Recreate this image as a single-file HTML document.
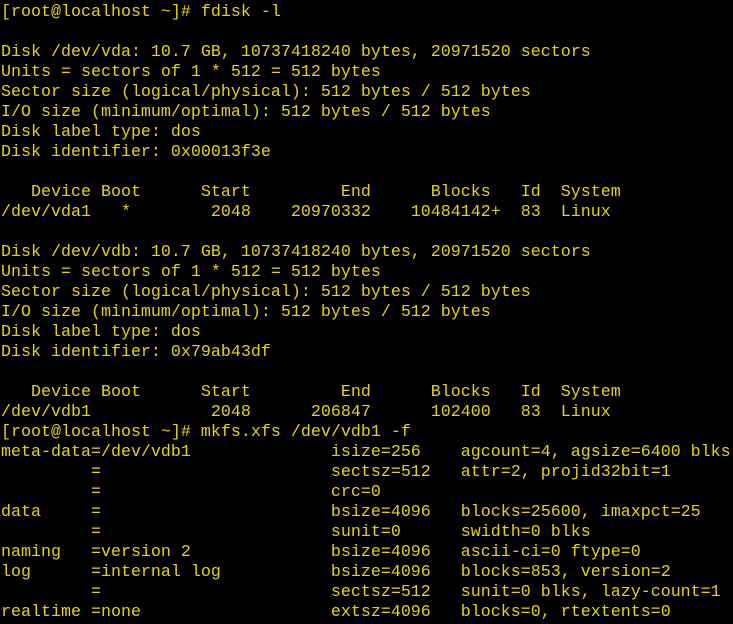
<!DOCTYPE html>
<html><head><meta charset="utf-8"><style>
html,body{margin:0;padding:0;background:#000;width:733px;height:624px;overflow:hidden}
pre{margin:0;padding:3px 0 0 1px;font-family:"Liberation Mono",monospace;font-size:16.667px;line-height:20px;color:#e3d21c;white-space:pre}
</style></head><body><pre>[root@localhost ~]# fdisk -l

Disk /dev/vda: 10.7 GB, 10737418240 bytes, 20971520 sectors
Units = sectors of 1 * 512 = 512 bytes
Sector size (logical/physical): 512 bytes / 512 bytes
I/O size (minimum/optimal): 512 bytes / 512 bytes
Disk label type: dos
Disk identifier: 0x00013f3e

   Device Boot      Start         End      Blocks   Id  System
/dev/vda1   *        2048    20970332    10484142+  83  Linux

Disk /dev/vdb: 10.7 GB, 10737418240 bytes, 20971520 sectors
Units = sectors of 1 * 512 = 512 bytes
Sector size (logical/physical): 512 bytes / 512 bytes
I/O size (minimum/optimal): 512 bytes / 512 bytes
Disk label type: dos
Disk identifier: 0x79ab43df

   Device Boot      Start         End      Blocks   Id  System
/dev/vdb1            2048      206847      102400   83  Linux
[root@localhost ~]# mkfs.xfs /dev/vdb1 -f
meta-data=/dev/vdb1              isize=256    agcount=4, agsize=6400 blks
         =                       sectsz=512   attr=2, projid32bit=1
         =                       crc=0
data     =                       bsize=4096   blocks=25600, imaxpct=25
         =                       sunit=0      swidth=0 blks
naming   =version 2              bsize=4096   ascii-ci=0 ftype=0
log      =internal log           bsize=4096   blocks=853, version=2
         =                       sectsz=512   sunit=0 blks, lazy-count=1
realtime =none                   extsz=4096   blocks=0, rtextents=0</pre></body></html>
